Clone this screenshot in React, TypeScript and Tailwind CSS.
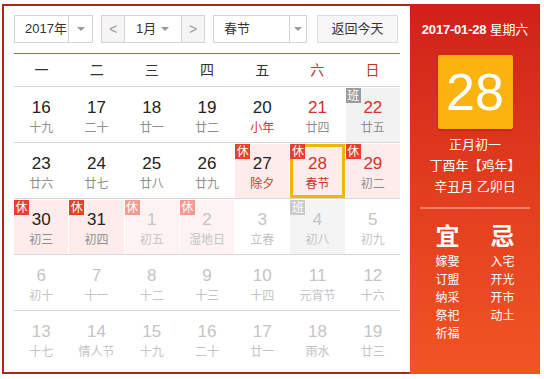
import React from 'react';

type Day = {
  n: number;
  l: string;
  other?: boolean;
  red?: boolean;
  fest?: boolean;
  badge?: '休' | '班';
  sel?: boolean;
};

const weeks: Day[][] = [
  [
    { n: 16, l: '十九' },
    { n: 17, l: '二十' },
    { n: 18, l: '廿一' },
    { n: 19, l: '廿二' },
    { n: 20, l: '小年', fest: true },
    { n: 21, l: '廿四', red: true },
    { n: 22, l: '廿五', red: true, badge: '班' },
  ],
  [
    { n: 23, l: '廿六' },
    { n: 24, l: '廿七' },
    { n: 25, l: '廿八' },
    { n: 26, l: '廿九' },
    { n: 27, l: '除夕', fest: true, badge: '休' },
    { n: 28, l: '春节', red: true, fest: true, badge: '休', sel: true },
    { n: 29, l: '初二', red: true, badge: '休' },
  ],
  [
    { n: 30, l: '初三', badge: '休' },
    { n: 31, l: '初四', badge: '休' },
    { n: 1, l: '初五', other: true, badge: '休' },
    { n: 2, l: '湿地日', other: true, badge: '休' },
    { n: 3, l: '立春', other: true },
    { n: 4, l: '初八', other: true, badge: '班' },
    { n: 5, l: '初九', other: true },
  ],
  [
    { n: 6, l: '初十', other: true },
    { n: 7, l: '十一', other: true },
    { n: 8, l: '十二', other: true },
    { n: 9, l: '十三', other: true },
    { n: 10, l: '十四', other: true },
    { n: 11, l: '元宵节', other: true },
    { n: 12, l: '十六', other: true },
  ],
  [
    { n: 13, l: '十七', other: true },
    { n: 14, l: '情人节', other: true },
    { n: 15, l: '十九', other: true },
    { n: 16, l: '二十', other: true },
    { n: 17, l: '廿一', other: true },
    { n: 18, l: '雨水', other: true },
    { n: 19, l: '廿三', other: true },
  ],
];

const Caret = () => (
  <span className="w-0 h-0 border-l-[4px] border-r-[4px] border-t-[4px] border-l-transparent border-r-transparent border-t-[#999]" />
);

function Cell({ d }: { d: Day }) {
  let bg = 'bg-white';
  if (d.badge === '休') bg = d.other ? 'bg-[#fdf3f2]' : 'bg-[#fdeceb]';
  if (d.badge === '班') bg = d.other ? 'bg-[#f4f4f4]' : 'bg-[#f2f2f2]';

  let num = 'text-[#222]';
  if (d.red) num = 'text-[#d2332b]';
  if (d.other) num = 'text-[#c4c4c4]';

  let lunar = 'text-[#8f8f8f]';
  if (d.fest) lunar = 'text-[#d2332b]';
  if (d.other) lunar = 'text-[#c4c4c4]';

  let badge = '';
  if (d.badge === '休') badge = d.other ? 'bg-[#f39a93]' : 'bg-[#e8402f]';
  if (d.badge === '班') badge = d.other ? 'bg-[#c9c9c9]' : 'bg-[#9a9a9a]';

  return (
    <div className={`relative h-[54px] flex flex-col items-center ${bg} ${d.sel ? 'border-[3px] border-[#f5b313] pt-[6px]' : 'pt-[9px]'}`}>
      {d.badge && (
        <span className={`absolute ${d.sel ? '-left-[3px] -top-[3px]' : 'left-0 top-0'} w-[15px] h-[15px] flex items-center justify-center text-[12px] leading-none text-white ${badge}`}>
          {d.badge}
        </span>
      )}
      <span className={`text-[17px] leading-[21px] ${num}`}>{d.n}</span>
      <span className={`text-[12px] leading-[20px] ${lunar}`}>{d.l}</span>
    </div>
  );
}

export default function App() {
  return (
    <div className="w-[544px] h-[379px] bg-white pt-[4px] pl-[2px]" style={{ fontFamily: '"Liberation Sans", "Noto Sans CJK SC", sans-serif' }}>
      <div className="flex w-[538px] h-[370px]">
        <div className="w-[408px] border-l-2 border-t-2 border-b-2 border-[#b3251e] pl-[10px] pr-[10px] pt-[9px]">
          <div className="flex items-center h-[28px] text-[13px] text-[#333]">
            <div className="flex h-[28px] w-[79px] border border-[#d4d4d4]">
              <span className="flex-1 flex items-center pl-[10px]">2017年</span>
              <span className="w-[24px] border-l border-[#d4d4d4] flex items-center justify-center"><Caret /></span>
            </div>
            <div className="flex h-[28px] w-[104px] ml-[8px] border border-[#d4d4d4]">
              <span className="w-[22px] bg-[#f5f5f5] flex items-center justify-center text-[#999] text-[14px]">&lt;</span>
              <span className="flex-1 border-l border-r border-[#d4d4d4] flex items-center justify-between pl-[11px] pr-[12px]">1月<Caret /></span>
              <span className="w-[22px] bg-[#f5f5f5] flex items-center justify-center text-[#999] text-[14px]">&gt;</span>
            </div>
            <div className="flex h-[28px] w-[94px] ml-[8px] border border-[#d4d4d4]">
              <span className="flex-1 flex items-center pl-[10px]">春节</span>
              <span className="w-[17px] border-l border-[#d4d4d4] flex items-center justify-center"><Caret /></span>
            </div>
            <div className="flex h-[28px] w-[81px] ml-[10px] border border-[#dcdcdc] bg-[#f6f6f6] items-center justify-center">返回今天</div>
          </div>
          <div className="mt-[10px] border-t border-[#d9534f] grid grid-cols-7 h-[34px] items-center border-b border-b-[#d6d6d6] text-[14px]">
            {['一', '二', '三', '四', '五', '六', '日'].map((w, i) => (
              <span key={w} className={`text-center ${i > 4 ? 'text-[#c8302a]' : 'text-[#333]'}`}>{w}</span>
            ))}
          </div>
          {weeks.map((row, i) => (
            <div key={i} className={`grid grid-cols-7 gap-x-px pt-px ${i < 4 ? 'border-b border-[#d6d6d6]' : ''}`}>
              {row.map((d, j) => <Cell key={j} d={d} />)}
            </div>
          ))}
        </div>
        <div className="w-[130px] bg-gradient-to-b from-[#d0201a] to-[#f25424] flex flex-col items-center text-white">
          <div className="mt-[17px] text-[13px] leading-[18px] font-bold tracking-[-0.2px]">2017-01-28 <span className="font-normal">星期六</span></div>
          <div className="mt-[16px] w-[75px] h-[74px] bg-[#fbb40f] rounded-[2px] flex items-center justify-center text-[52px] leading-none shadow-[0_2px_2px_rgba(120,0,0,0.25)]">28</div>
          <div className="mt-[5px] text-[13px] leading-[21px] text-center">
            <div>正月初一</div>
            <div>丁酉年【鸡年】</div>
            <div>辛丑月 乙卯日</div>
          </div>
          <div className="mt-[10px] w-[110px] h-[2px] bg-[#f08369]" />
          <div className="mt-[14px] flex w-[110px] justify-center">
            <div className="w-[55px] flex flex-col items-center">
              <span className="text-[24px] leading-[28px] font-bold">宜</span>
              <div className="text-[12px] leading-[18px] text-center mt-[2px]">
                <div>嫁娶</div><div>订盟</div><div>纳采</div><div>祭祀</div><div>祈福</div>
              </div>
            </div>
            <div className="w-[55px] flex flex-col items-center">
              <span className="text-[24px] leading-[28px] font-bold">忌</span>
              <div className="text-[12px] leading-[18px] text-center mt-[2px]">
                <div>入宅</div><div>开光</div><div>开市</div><div>动土</div>
              </div>
            </div>
          </div>
        </div>
      </div>
    </div>
  );
}
